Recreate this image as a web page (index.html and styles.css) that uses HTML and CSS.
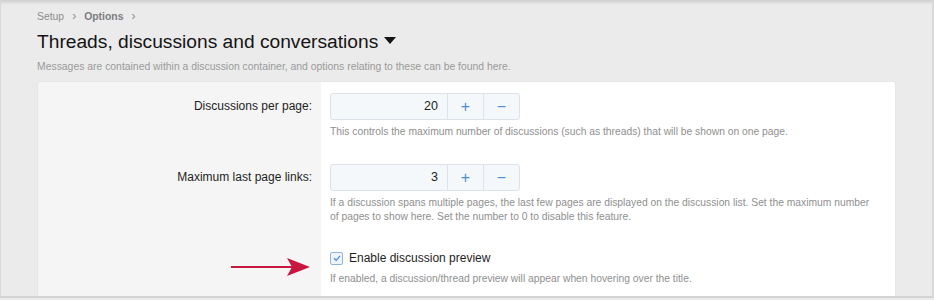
FILE: index.html
```html
<!DOCTYPE html>
<html lang="en">
<head>
    <meta charset="UTF-8">
    <title>Threads, discussions and conversations</title>
    <link rel="stylesheet" href="styles.css">
</head>
<body>
    <div class="page">
        <div class="breadcrumb">
            <span>Setup</span><span class="sep">&rsaquo;</span><b>Options</b><span class="sep">&rsaquo;</span>
        </div>
        <h1 class="title">Threads, discussions and conversations <span class="caret"></span></h1>
        <p class="desc">Messages are contained within a discussion container, and options relating to these can be found here.</p>

        <div class="block">
            <div class="row">
                <div class="label">Discussions per page:</div>
                <div class="field">
                    <div class="spin">
                        <div class="spin-value">20</div>
                        <div class="spin-btn">+</div>
                        <div class="spin-btn">&minus;</div>
                    </div>
                    <div class="hint">This controls the maximum number of discussions (such as threads) that will be shown on one page.</div>
                </div>
            </div>
            <div class="row">
                <div class="label">Maximum last page links:</div>
                <div class="field">
                    <div class="spin">
                        <div class="spin-value">3</div>
                        <div class="spin-btn">+</div>
                        <div class="spin-btn">&minus;</div>
                    </div>
                    <div class="hint">If a discussion spans multiple pages, the last few pages are displayed on the discussion list. Set the maximum number of pages to show here. Set the number to 0 to disable this feature.</div>
                </div>
            </div>
            <div class="row row-check">
                <div class="label">
                    <svg class="arrow" width="80" height="20" viewBox="0 0 80 20">
                        <line x1="0" y1="10" x2="66" y2="10" stroke="#c8173f" stroke-width="2"/>
                        <path d="M56 1 L79 10 L56 19 L61 10 Z" fill="#c8173f"/>
                    </svg>
                </div>
                <div class="field">
                    <label class="check">
                        <span class="box">
                            <svg width="10" height="10" viewBox="0 0 10 10"><path d="M2 5.2 L4.2 7.3 L8 2.8" fill="none" stroke="#4a8fd0" stroke-width="1.3"/></svg>
                        </span>
                        Enable discussion preview
                    </label>
                    <div class="hint">If enabled, a discussion/thread preview will appear when hovering over the title.</div>
                </div>
            </div>
        </div>
    </div>
</body>
</html>
```

FILE: styles.css
```css
html, body {
    margin: 0;
    height: 100%;
}
body {
    font-family: "Liberation Sans", Arial, sans-serif;
    background: #ebebeb;
    overflow: hidden;
}
.page {
    height: 298px;
    box-sizing: border-box;
    padding: 8px 36px 0 36px;
    border-left: 1px solid #d9d9d9;
    border-right: 2px solid #d9d9d9;
    border-bottom: 2px solid #d4d4d4;
    background: linear-gradient(#cfcfcf, #ebebeb 5px);
    overflow: hidden;
}
.breadcrumb {
    font-size: 10.4px;
    color: #8d8d8d;
    height: 16px;
    line-height: 16px;
}
.breadcrumb b {
    font-weight: bold;
    color: #7d7d7d;
}
.breadcrumb .sep {
    margin: 0 8px;
    font-size: 12px;
}
.title {
    margin: 6px 0 0 0;
    font-size: 19.2px;
    font-weight: normal;
    color: #141414;
    line-height: 24px;
}
.caret {
    display: inline-block;
    width: 0;
    height: 0;
    border-left: 6px solid transparent;
    border-right: 6px solid transparent;
    border-top: 7px solid #141414;
    vertical-align: 4px;
}
.desc {
    margin: 6px 0 0;
    font-size: 10.4px;
    color: #9a9a9a;
    line-height: 13px;
}
.block {
    margin-top: 8px;
    background: linear-gradient(to right, #f5f5f5 283px, #fff 283px);
    border: 1px solid #e6e6e6;
    border-radius: 3px 3px 0 0;
    padding-top: 11px;
    height: 230px;
}
.row {
    display: grid;
    grid-template-columns: 274px 1fr;
    column-gap: 18px;
}
.row + .row {
    margin-top: 25px;
}
.label {
    font-size: 12px;
    color: #1e1e1e;
    text-align: right;
    line-height: 27px;
}
.field {
    padding-right: 22px;
}
.spin {
    display: flex;
    width: 190px;
    height: 27px;
    border: 1px solid #dde3ea;
    border-radius: 3px;
    background: #f5f8fb;
    box-sizing: border-box;
}
.spin-value {
    flex: 1;
    text-align: right;
    padding-right: 9px;
    font-size: 12.5px;
    line-height: 25px;
    color: #1e1e1e;
    border-right: 1px solid #dde3ea;
}
.spin-btn {
    width: 35px;
    text-align: center;
    color: #4c8ed0;
    font-size: 16px;
    line-height: 25px;
}
.spin-btn + .spin-btn {
    border-left: 1px solid #dde3ea;
}
.hint {
    margin-top: 5px;
    font-size: 10.3px;
    line-height: 14px;
    color: #8f8f8f;
}
.row-check {
    margin-top: 24px !important;
}
.row-check .label {
    line-height: 20px;
    display: flex;
    justify-content: flex-end;
    align-items: center;
}
.arrow {
    display: block;
    margin-right: 1px;
}
.check {
    display: flex;
    align-items: center;
    font-size: 12px;
    color: #1e1e1e;
    line-height: 20px;
}
.box {
    width: 11px;
    height: 11px;
    border: 1px solid #8db6dc;
    border-radius: 2px;
    background: #eef4fa;
    margin-right: 6px;
    display: flex;
    align-items: center;
    justify-content: center;
}
.row-check .hint {
    margin-top: 4px;
}
```
